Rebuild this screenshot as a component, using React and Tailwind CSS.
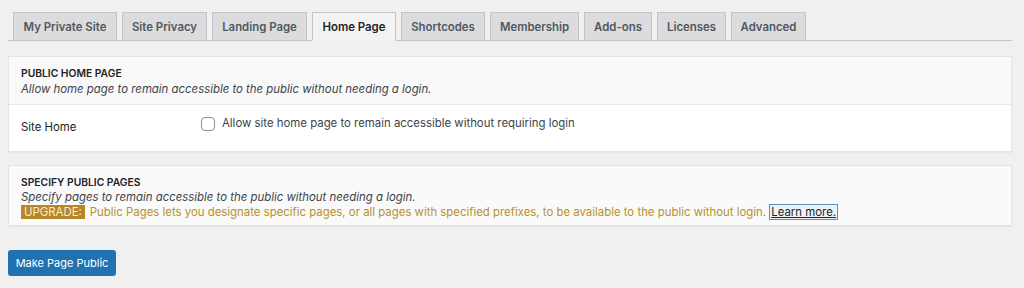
import React, { useState } from 'react';

const tabs = [
  { label: 'My Private Site', w: 'w-[104px]' },
  { label: 'Site Privacy', w: 'w-[85px]' },
  { label: 'Landing Page', w: 'w-[95px]' },
  { label: 'Home Page', w: 'w-[84px]' },
  { label: 'Shortcodes', w: 'w-[84px]' },
  { label: 'Membership', w: 'w-[89px]' },
  { label: 'Add-ons', w: 'w-[68px]' },
  { label: 'Licenses', w: 'w-[69px]' },
  { label: 'Advanced', w: 'w-[75px]' },
];

export default function App() {
  const [active, setActive] = useState('Home Page');
  const [siteHome, setSiteHome] = useState(false);

  return (
    <div className="min-h-screen bg-[#f0f0f1] pl-2 pr-3 pt-3 font-['Inter','Liberation_Sans',sans-serif] text-[11.4px] text-[#1d2327]">
      {/* tabs */}
      <div className="flex h-[29px] items-end gap-[5px] border-b border-[#c3c4c7] pl-[5px]">
        {tabs.map((tab) => {
          const isActive = tab.label === active;
          return (
            <button
              key={tab.label}
              onClick={() => setActive(tab.label)}
              className={
                isActive
                  ? `-mb-px flex h-[29px] items-center justify-center whitespace-nowrap border border-[#c3c4c7] border-b-[#f3f3f4] bg-[#f3f3f4] pt-[2px] text-[11.4px] font-semibold text-[#1d2327] ${tab.w}`
                  : `-mb-px flex h-[29px] items-center justify-center whitespace-nowrap border border-[#c3c4c7] bg-[#dcdcde] pt-[2px] text-[11.4px] font-semibold text-[#50575e] ${tab.w}`
              }
            >
              {tab.label}
            </button>
          );
        })}
      </div>

      {/* public home page */}
      <div className="mt-[15px] border border-[#e4e4e6] bg-white shadow-[0_1px_1px_rgba(0,0,0,0.04)]">
        <div className="border-b border-[#e8e8ea] bg-[#f9f9f9] px-3 pb-[7px] pt-[8px]">
          <h3 className="text-[10.3px] font-semibold uppercase leading-[16px] text-[#1d2327]">
            Public Home Page
          </h3>
          <p className="italic leading-[16px] text-[#3c434a]">
            Allow home page to remain accessible to the public without needing a login.
          </p>
        </div>
        <div className="flex h-[46px] items-start px-3">
          <div className="w-[180px] pt-[15px] leading-[15px] text-[#1d2327]">Site Home</div>
          <label className="flex cursor-pointer items-center gap-[7px] pt-[11px] leading-[15px] text-[#3c434a]">
            <input
              type="checkbox"
              checked={siteHome}
              onChange={(e) => setSiteHome(e.target.checked)}
              className="mt-px h-[14px] w-[14px] cursor-pointer appearance-none rounded-[4px] border border-[#8c8f94] bg-white checked:bg-[#2271b1]"
            />
            Allow site home page to remain accessible without requiring login
          </label>
        </div>
      </div>

      {/* specify public pages */}
      <div className="mt-[13px] border border-[#e4e4e6] bg-[#fafafa] px-3 pb-[5px] pt-[9px] shadow-[0_1px_1px_rgba(0,0,0,0.04)]">
        <h3 className="text-[10.3px] font-semibold uppercase leading-[15px] text-[#1d2327]">
          Specify Public Pages
        </h3>
        <p className="italic leading-[15px] text-[#3c434a]">
          Specify pages to remain accessible to the public without needing a login.
        </p>
        <p className="leading-[15px] text-[#b8902e]">
          <span className="mr-[5px] bg-[#b7862b] px-[3px] text-[#f7ecd0]">UPGRADE:</span>
          Public Pages lets you designate specific pages, or all pages with specified prefixes, to be available to the public without login.{' '}
          <a
            href="#"
            className="border border-[#5b8ec2] bg-[#eef3f8] px-px text-[#1d2327] underline"
          >
            Learn more.
          </a>
        </p>
      </div>

      <button className="mt-[24px] h-[26px] w-[108px] whitespace-nowrap rounded-[3px] bg-[#2271b1] text-[11px] text-white">
        Make Page Public
      </button>
    </div>
  );
}
